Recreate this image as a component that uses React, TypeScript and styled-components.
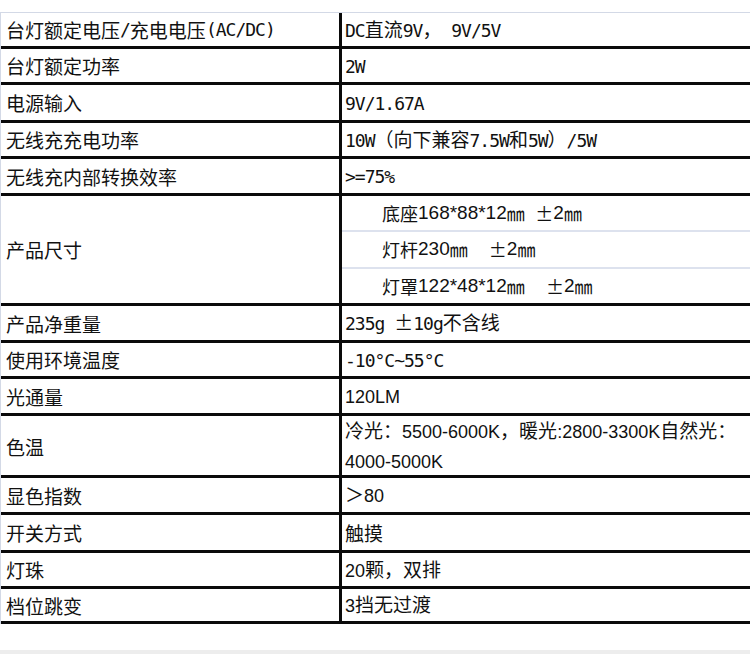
import React from "react";
import styled, { createGlobalStyle } from "styled-components";

const GlobalStyle = createGlobalStyle`
  html, body {
    margin: 0;
    padding: 0;
    background: #ffffff;
  }
  body {
    font-family: "Liberation Sans", "Noto Sans CJK SC", sans-serif;
    color: #111111;
  }
`;

type Face = "mono" | "sans";

interface SpecRow {
  label: string;
  value?: string[];
  face?: Face;
  h: number;
  parts?: string[];
}

const rows: SpecRow[] = [
  { label: "台灯额定电压/充电电压(AC/DC)", value: ["DC直流9V， 9V/5V"], face: "mono", h: 36 },
  { label: "台灯额定功率", value: ["2W"], face: "mono", h: 36 },
  { label: "电源输入", value: ["9V/1.67A"], face: "mono", h: 38 },
  { label: "无线充充电功率", value: ["10W（向下兼容7.5W和5W）/5W"], face: "mono", h: 36 },
  { label: "无线充内部转换效率", value: [">=75%"], face: "mono", h: 37 },
  {
    label: "产品尺寸",
    h: 110,
    parts: ["底座168*88*12㎜  ±2㎜", "灯杆230㎜    ±2㎜", "灯罩122*48*12㎜    ±2㎜"],
  },
  { label: "产品净重量", value: ["235g ±10g不含线"], face: "mono", h: 37 },
  { label: "使用环境温度", value: ["-10°C~55°C"], face: "mono", h: 36 },
  { label: "光通量", value: ["120LM"], face: "sans", h: 37 },
  {
    label: "色温",
    value: ["冷光：5500-6000K，暖光:2800-3300K自然光：", "4000-5000K"],
    face: "sans",
    h: 62,
  },
  { label: "显色指数", value: ["＞80"], face: "sans", h: 37 },
  { label: "开关方式", value: ["触摸"], face: "sans", h: 38 },
  { label: "灯珠", value: ["20颗，双排"], face: "sans", h: 36 },
  { label: "档位跳变", value: ["3挡无过渡"], face: "sans", h: 35 },
];

const Page = styled.div`
  width: 750px;
  height: 654px;
  overflow: hidden;
  padding-top: 12px;
  box-sizing: border-box;
  display: flex;
  flex-direction: column;
`;

const Table = styled.div`
  border-top: 1px solid #d3d9e6;
  border-left: 1px solid #d3d9e6;
  display: flex;
  flex-direction: column;
`;

const Row = styled.div<{ $h: number }>`
  display: grid;
  grid-template-columns: 341px 1fr;
  height: ${(p) => p.$h}px;
  box-sizing: border-box;
  border-bottom: 3px solid #0a0a0a;
`;

const Label = styled.div`
  display: flex;
  align-items: center;
  padding-left: 5px;
  border-right: 3px solid #0a0a0a;
  font-family: "Noto Sans CJK SC", sans-serif;
  font-size: 19px;
  white-space: pre;
`;

const Value = styled.div`
  display: flex;
  flex-direction: column;
  justify-content: center;
  padding-left: 3px;
  font-family: "Noto Sans CJK SC", sans-serif;
  font-size: 19px;
  line-height: 28px;
  white-space: pre;
`;

// latin runs: tall but narrow, like the half-width glyphs of the original
const Ascii = styled.span<{ $face: Face; $size: number }>`
  font-family: ${(p) =>
    p.$face === "mono"
      ? `"DejaVu Sans Mono", "Liberation Mono", monospace`
      : `"Liberation Sans", sans-serif`};
  font-size: ${(p) => p.$size}px;
  letter-spacing: ${(p) => (p.$face === "mono" ? "-1px" : "0")};
`;

const Parts = styled.div`
  display: flex;
  flex-direction: column;
`;

const Part = styled.div`
  flex: 1;
  display: flex;
  align-items: center;
  padding-left: 40px;
  font-family: "Noto Sans CJK SC", sans-serif;
  font-size: 18px;
  white-space: pre;
  border-bottom: 2px solid #dde2ee;
  &:last-child {
    border-bottom: none;
  }
`;

const BottomBand = styled.div`
  margin-top: auto;
  height: 4px;
  background: #ededed;
`;

const LATIN = /([\x20-\x7E\xB0]+)/;

const Runs = ({ text, face, size }: { text: string; face: Face; size: number }) => (
  <>
    {text.split(LATIN).map((chunk, i) =>
      i % 2 === 1 ? (
        <Ascii key={i} $face={face} $size={size}>
          {chunk}
        </Ascii>
      ) : (
        <React.Fragment key={i}>{chunk}</React.Fragment>
      )
    )}
  </>
);

export default function App() {
  return (
    <>
      <GlobalStyle />
      <Page>
        <Table>
          {rows.map((r) => (
            <Row key={r.label} $h={r.h}>
              <Label>
                <Runs text={r.label} face="mono" size={18} />
              </Label>
              {r.parts ? (
                <Parts>
                  {r.parts.map((p) => (
                    <Part key={p}>
                      <Runs text={p} face="sans" size={19} />
                    </Part>
                  ))}
                </Parts>
              ) : (
                <Value>
                  {r.value?.map((line) => (
                    <div key={line}>
                      <Runs text={line} face={r.face ?? "sans"} size={18} />
                    </div>
                  ))}
                </Value>
              )}
            </Row>
          ))}
        </Table>
        <BottomBand />
      </Page>
    </>
  );
}
